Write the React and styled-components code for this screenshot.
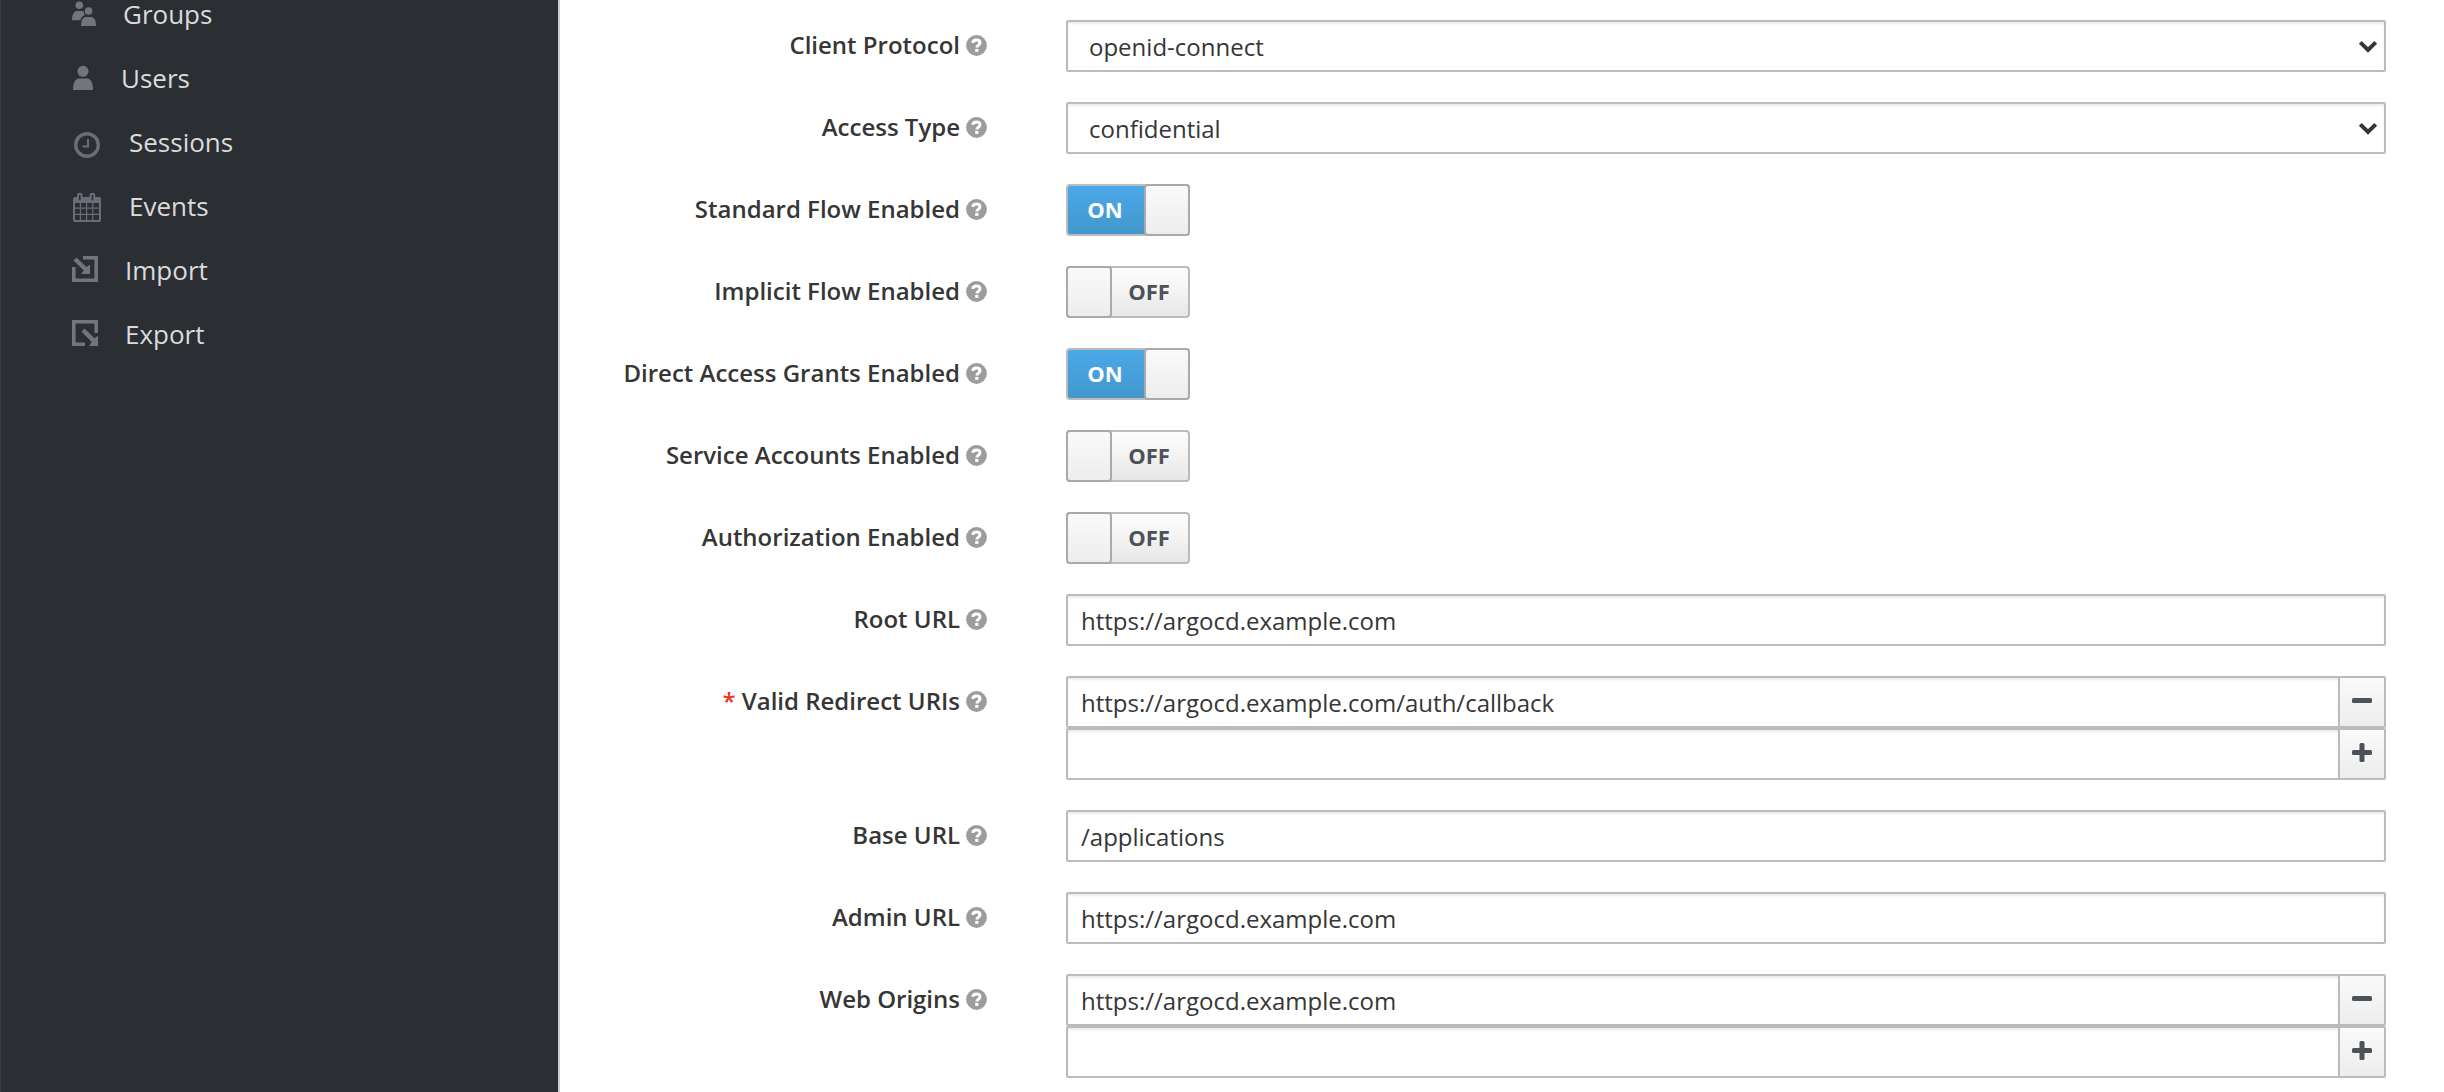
import React, { useState } from "react";
import styled, { createGlobalStyle } from "styled-components";

const GlobalStyle = createGlobalStyle`
  *, *::before, *::after { box-sizing: border-box; }
  body {
    margin: 0;
    background: #fff;
    color: #363636;
    font-family: "Open Sans", "Noto Sans", sans-serif;
    font-size: 24px;
    line-height: 32px;
  }
  input, select, button { font: inherit; color: inherit; }
`;

const Page = styled.div`
  display: flex;
  min-height: 100vh;
`;

const Sidebar = styled.nav`
  flex: 0 0 560px;
  background: #2b2e33;
  border-left: 1px solid #3a3e43;
  border-right: 2px solid #ccc;
`;

const NavList = styled.ul`
  display: flex;
  flex-direction: column;
  gap: 36px;
  list-style: none;
  margin: 0;
  padding: 0;
`;

const NavLink = styled.a`
  display: flex;
  align-items: center;
  gap: 27px;
  height: 28px;
  padding-left: 71px;
  color: #dbdbdb;
  font-size: 26px;
  line-height: 28px;
  text-decoration: none;
`;

const NavIcon = styled.svg`
  flex: none;
  width: ${(p) => p.$width}px;
  height: 32px;
  overflow: visible;
  fill: ${(p) => p.$tone};
`;

const Main = styled.main`
  flex: 1;
  min-width: 0;
  padding: 20px 58px 14px 40px;
`;

const Form = styled.form`
  display: flex;
  flex-direction: column;
  gap: 30px;
`;

const Row = styled.div`
  display: grid;
  grid-template-columns: 387px minmax(0, 1fr);
  column-gap: 79px;
  align-items: start;
`;

const LabelCell = styled.div`
  display: flex;
  align-items: center;
  justify-content: flex-end;
  gap: 6px;
  height: 50px;
`;

const Label = styled.label`
  font-weight: 600;
  white-space: nowrap;
`;

const Required = styled.span`
  color: #ee3124;
`;

const HelpIcon = styled.svg`
  flex: none;
  width: 21px;
  height: 21px;
`;

const boxed = `
  border: 2px solid #bbb;
  border-radius: 2px;
  background: #fff;
  box-shadow: inset 0 2px 2px rgba(3, 3, 3, 0.08);
  outline: none;
`;

const TextInput = styled.input`
  ${boxed}
  display: block;
  flex: 1;
  width: 100%;
  min-width: 0;
  height: 52px;
  padding: 2px 13px;
`;

const SelectWrap = styled.div`
  position: relative;
`;

const Select = styled.select`
  ${boxed}
  appearance: none;
  display: block;
  width: 100%;
  height: 52px;
  padding: 4px 60px 2px 21px;
`;

const Chevron = styled.svg`
  position: absolute;
  top: 20px;
  right: 8px;
  width: 20px;
  height: 14px;
  pointer-events: none;
`;

const Switch = styled.label`
  position: relative;
  display: flex;
  width: 124px;
  height: 52px;
  border: 2px solid #bbb;
  border-radius: 4px;
  background: ${(p) =>
    p.$on
      ? "linear-gradient(#4ba8e8, #4397cc)"
      : "linear-gradient(#fefefe, #e7e7e7)"};
  color: ${(p) => (p.$on ? "#fff" : "#4d5258")};
  flex-direction: ${(p) => (p.$on ? "row" : "row-reverse")};
  cursor: pointer;
`;

const SwitchInput = styled.input`
  position: absolute;
  inset: 0;
  width: 100%;
  height: 100%;
  margin: 0;
  opacity: 0;
  cursor: pointer;
`;

const SwitchText = styled.span`
  flex: 1;
  padding-right: 2px;
  font-size: 22px;
  font-weight: 700;
  line-height: 46px;
  text-align: center;
`;

const SwitchHandle = styled.span`
  flex: 0 0 46px;
  margin: ${(p) => (p.$on ? "-2px -2px -2px 0" : "-2px 0 -2px -2px")};
  border: 2px solid #aaa;
  border-radius: 4px;
  background: linear-gradient(#fafafa, #ededed);
`;

const InputGroup = styled.div`
  display: flex;
`;

const GroupButton = styled.button`
  display: flex;
  align-items: center;
  justify-content: center;
  flex: 0 0 48px;
  height: 52px;
  margin-left: -2px;
  padding: 0;
  border: 2px solid #bbb;
  border-radius: 0 2px 2px 0;
  background: linear-gradient(#fafafa, #ededed);
  cursor: pointer;
`;

const SLATE = "#72767b";
const STEEL = "#6a6d78";

const NAV = [
  {
    name: "Groups",
    width: 24,
    tone: SLATE,
    art: (
      <>
        <circle cx="7.3" cy="7.3" r="3.8" />
        <path d="M0 22.3C0 16 2.5 13 5 13h5c1.200 0 1.800.500 2 1.300-.2 1 .3 2 1 2.700-2.500.8-3.900 2.500-4.700 5.300z" />
        <circle cx="16.600" cy="13" r="3.800" />
        <path d="M9 28c0-5.500 1.700-9 5-9h5.200c3.300 0 4.800 3.500 4.800 9z" />
      </>
    ),
  },
  {
    name: "Users",
    width: 22,
    tone: SLATE,
    art: (
      <>
        <circle cx="11" cy="9.300" r="5.500" />
        <path d="M1 28c0-7 2-11 5.500-11.600h9C19 17 21 21 21 28z" />
      </>
    ),
  },
  {
    name: "Sessions",
    width: 30,
    tone: STEEL,
    art: (
      <>
        <circle cx="15" cy="19" r="11.300" fill="none" stroke={STEEL} strokeWidth="3.400" />
        <path d="M16 13v7.500h-5.500" fill="none" stroke={STEEL} strokeWidth="2" />
      </>
    ),
  },
  {
    name: "Events",
    width: 30,
    tone: STEEL,
    art: (
      <>
        <path
          fillRule="evenodd"
          d="M3 7h2V5.500a2.800 2.800 0 0 1 5.600 0V7h7V5.500a2.800 2.800 0 0 1 5.600 0V7H27a2 2 0 0 1 2 2v21a2 2 0 0 1-2 2H3a2 2 0 0 1-2-2V9a2 2 0 0 1 2-2zm0 6v4.500h4.800V13zm6 0v4.500h5V13zm6.200 0v4.500h5V13zm6.200 0v4.500H27V13zM3 18.700v5h4.800v-5zm6 0v5h5v-5zm6.200 0v5h5v-5zm6.200 0v5H27v-5zM3 25v5h4.800v-5zm6 0v5h5v-5zm6.200 0v5h5v-5zm6.200 0v5H27v-5z"
        />
        <path d="M7.800 5.500v4M20.400 5.500v4" stroke="#2b2e33" strokeWidth="1.600" strokeLinecap="round" />
      </>
    ),
  },
  {
    name: "Import",
    width: 26,
    tone: SLATE,
    art: (
      <>
        <path d="M11 2h15v26H0V13h3.600v11.400h18.800V5.600H11z" />
        <path d="M4.500 3.500l10 9.500 3.500-2.500V20H9l2.800-3.500L1.500 6.500z" />
      </>
    ),
  },
  {
    name: "Export",
    width: 26,
    tone: SLATE,
    art: (
      <>
        <path d="M0 2h26v13h-3.600V5.600H3.600v18.800H13V28H0z" />
        <path d="M12.500 10.500l10 9.800 3.500-2.500V28h-9l2.800-4L9.500 13.700z" />
      </>
    ),
  },
];

function Help() {
  return (
    <HelpIcon viewBox="0 0 21 21" aria-hidden="true">
      <circle cx="10.500" cy="10.500" r="10.400" fill="#9c9c9c" />
      <path
        d="M6.700 7.900c.3-2 1.700-2.900 3.700-2.900 2.100 0 3.600 1.100 3.600 2.800 0 2.500-3.200 2.400-3.200 4.800"
        fill="none"
        stroke="#fff"
        strokeWidth="2.900"
      />
      <rect x="9.200" y="13.900" width="3.200" height="3" fill="#fff" />
    </HelpIcon>
  );
}

function Field({ id, label, required, children }) {
  return (
    <Row>
      <LabelCell>
        <Label htmlFor={id}>
          {required && <Required>* </Required>}
          {label}
        </Label>
        <Help />
      </LabelCell>
      {children}
    </Row>
  );
}

function SelectField({ id, label, options }) {
  return (
    <Field id={id} label={label}>
      <SelectWrap>
        <Select id={id} defaultValue={options[0]}>
          {options.map((o) => (
            <option key={o}>{o}</option>
          ))}
        </Select>
        <Chevron viewBox="0 0 20 14" aria-hidden="true">
          <path d="M2.300 2.300L10 10l7.700-7.700" fill="none" stroke="#363636" strokeWidth="4" />
        </Chevron>
      </SelectWrap>
    </Field>
  );
}

function SwitchField({ id, label, initial = false }) {
  const [on, setOn] = useState(initial);
  return (
    <Field id={id} label={label}>
      <Switch $on={on}>
        <SwitchText>{on ? "ON" : "OFF"}</SwitchText>
        <SwitchHandle $on={on} />
        <SwitchInput
          id={id}
          type="checkbox"
          checked={on}
          onChange={(e) => setOn(e.target.checked)}
        />
      </Switch>
    </Field>
  );
}

function TextField({ id, label, value }) {
  return (
    <Field id={id} label={label}>
      <TextInput id={id} type="text" defaultValue={value} />
    </Field>
  );
}

function ListField({ id, label, value, required }) {
  return (
    <Field id={id} label={label} required={required}>
      <div>
        <InputGroup>
          <TextInput id={id} type="text" defaultValue={value} />
          <GroupButton type="button" aria-label={`Remove from ${label}`}>
            <svg width="20" height="20" viewBox="0 0 20 20" fill="#4d5258">
              <rect y="6" width="20" height="5" rx="1.500" />
            </svg>
          </GroupButton>
        </InputGroup>
        <InputGroup>
          <TextInput type="text" aria-label={`New entry for ${label}`} />
          <GroupButton type="button" aria-label={`Add to ${label}`}>
            <svg width="20" height="20" viewBox="0 0 20 20" fill="#4d5258" overflow="visible">
              <rect y="6" width="20" height="5" rx="1.500" />
              <rect x="7.500" y="-1" width="5" height="19" rx="1.500" />
            </svg>
          </GroupButton>
        </InputGroup>
      </div>
    </Field>
  );
}

export default function App() {
  return (
    <Page>
      <GlobalStyle />
      <Sidebar>
        <NavList>
          {NAV.map(({ name, width, tone, art }) => (
            <li key={name}>
              <NavLink href={`#${name.toLowerCase()}`}>
                <NavIcon $width={width} $tone={tone} viewBox={`0 0 ${width} 32`} aria-hidden="true">
                  {art}
                </NavIcon>
                {name}
              </NavLink>
            </li>
          ))}
        </NavList>
      </Sidebar>
      <Main>
        <Form>
          <SelectField id="protocol" label="Client Protocol" options={["openid-connect", "saml"]} />
          <SelectField id="access" label="Access Type" options={["confidential", "public", "bearer-only"]} />
          <SwitchField id="standard" label="Standard Flow Enabled" initial />
          <SwitchField id="implicit" label="Implicit Flow Enabled" />
          <SwitchField id="direct" label="Direct Access Grants Enabled" initial />
          <SwitchField id="service" label="Service Accounts Enabled" />
          <SwitchField id="authorization" label="Authorization Enabled" />
          <TextField id="root" label="Root URL" value="https://argocd.example.com" />
          <ListField
            id="redirect"
            label="Valid Redirect URIs"
            value="https://argocd.example.com/auth/callback"
            required
          />
          <TextField id="base" label="Base URL" value="/applications" />
          <TextField id="admin" label="Admin URL" value="https://argocd.example.com" />
          <ListField id="origins" label="Web Origins" value="https://argocd.example.com" />
        </Form>
      </Main>
    </Page>
  );
}
